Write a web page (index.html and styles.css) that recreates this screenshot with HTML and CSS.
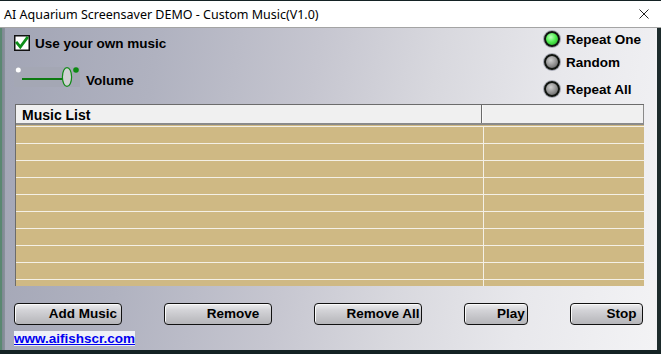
FILE: index.html
```html
<!DOCTYPE html>
<html>
<head>
<meta charset="utf-8">
<link rel="stylesheet" href="styles.css">
</head>
<body>
<div class="screen">
  <div class="titlebar">
    <span class="title">AI Aquarium Screensaver DEMO - Custom Music(V1.0)</span>
    <svg class="close" width="10" height="10" viewBox="0 0 10 10"><path d="M0.5 0.5 L9.5 9.5 M9.5 0.5 L0.5 9.5" stroke="#222" stroke-width="1" fill="none"/></svg>
  </div>
  <div class="body">
    <div class="frame-left"></div>
    <div class="client">
      <div class="top">
        <div class="opts">
          <div class="check">
            <svg class="box" width="16" height="16" viewBox="0 0 16 16">
              <rect x="0.75" y="0.75" width="14.5" height="14.5" fill="#fff" stroke="#111" stroke-width="1.5"/>
              <path d="M3 8 L6.3 12 L13 3" stroke="#0f8f1a" stroke-width="2.8" fill="none" stroke-linecap="square"/>
            </svg>
            <span>Use your own music</span>
          </div>
          <div class="vol">
            <svg class="slider" width="66" height="20" viewBox="0 0 66 20">
              <rect x="0" y="0" width="66" height="20" fill="#a4a7b4"/>
              <circle cx="4.3" cy="3" r="2.5" fill="#fff"/>
              <rect x="8" y="11" width="41" height="2" fill="#0c7a10"/>
              <ellipse cx="53" cy="10" rx="4.6" ry="9.4" fill="#d2d2d4" stroke="#118a18" stroke-width="1.2"/>
              <circle cx="62" cy="3" r="2.8" fill="#0c8a12"/>
            </svg>
            <span>Volume</span>
          </div>
        </div>
        <div class="radios">
          <div class="radio r1"><span class="dot on"></span>Repeat One</div>
          <div class="radio r2"><span class="dot"></span>Random</div>
          <div class="radio r3"><span class="dot"></span>Repeat All</div>
        </div>
      </div>
      <div class="list">
        <div class="head"><div class="h1">Music List</div><div class="h2"></div></div>
        <div class="rows">
          <div class="row"><div class="c1"></div><div class="c2"></div></div>
          <div class="row"><div class="c1"></div><div class="c2"></div></div>
          <div class="row"><div class="c1"></div><div class="c2"></div></div>
          <div class="row"><div class="c1"></div><div class="c2"></div></div>
          <div class="row"><div class="c1"></div><div class="c2"></div></div>
          <div class="row"><div class="c1"></div><div class="c2"></div></div>
          <div class="row"><div class="c1"></div><div class="c2"></div></div>
          <div class="row"><div class="c1"></div><div class="c2"></div></div>
          <div class="row"><div class="c1"></div><div class="c2"></div></div>
          <div class="row"><div class="c1"></div><div class="c2"></div></div>
        </div>
      </div>
      <div class="buttons">
        <div class="btn w108">Add Music</div>
        <div class="btn w108">Remove</div>
        <div class="btn w108">Remove All</div>
        <div class="btn w64">Play</div>
        <div class="btn w73">Stop</div>
      </div>
      <div class="linkrow"><a class="link">www.aifishscr.com</a></div>
    </div>
    <div class="frame-right"></div>
  </div>
</div>
</body>
</html>
```
FILE: styles.css
```css
html, body {
  margin: 0;
  padding: 0;
  background: #0f1c1e;
}
.screen {
  width: 661px;
  height: 354px;
  padding-top: 1px;
  box-sizing: border-box;
  background: #142224;
  overflow: hidden;
}
.titlebar {
  height: 26px;
  background: #fff;
  border-bottom: 1px solid #a4a4a4;
  display: flex;
  align-items: center;
}
.title {
  font-family: "Noto Sans", "DejaVu Sans", sans-serif;
  font-size: 12.5px;
  color: #000;
  padding-left: 4px;
  padding-top: 1px;
}
.close {
  margin-left: auto;
  margin-right: 12px;
}
.body {
  display: flex;
  height: 322px;
}
.frame-left {
  width: 5px;
  background: linear-gradient(to right, #5a8871 0, #5a8871 2px, #7d8891 2px, #8a929c 5px);
}
.frame-right {
  width: 6px;
  background: linear-gradient(to right, #f2f2f4 0, #f2f2f4 2px, #1d2b2c 2px, #1d2b2c 6px);
}
.client {
  width: 650px;
  box-sizing: border-box;
  padding: 0 11px 0 9px;
  background: linear-gradient(100deg, #a2a5b5 0%, #b0b2c0 22%, #c6c6d0 45%, #d8d8de 62%, #e8e8ec 80%, #f3f3f5 100%);
  font-family: "Liberation Sans", Arial, sans-serif;
  font-weight: bold;
  font-size: 13.5px;
  color: #000;
}
.top {
  height: 76px;
  display: flex;
  justify-content: space-between;
}
.opts {
  display: flex;
  flex-direction: column;
}
.check {
  margin-top: 7px;
  height: 16px;
  display: flex;
  align-items: center;
  gap: 5px;
}
.box { display: block; }
.vol {
  margin-top: 16px;
  height: 20px;
  display: flex;
  align-items: center;
  gap: 6px;
}
.vol span { padding-top: 6px; }
.slider { display: block; }
.radios {
  width: 100px;
  display: flex;
  flex-direction: column;
}
.radio {
  height: 18px;
  display: flex;
  align-items: center;
  gap: 6px;
}
.r1 { margin-top: 2px; }
.r2 { margin-top: 5px; }
.r3 { margin-top: 9px; }
.dot {
  width: 16px;
  height: 16px;
  box-sizing: border-box;
  border-radius: 50%;
  border: 2px solid #101410;
  background: radial-gradient(circle at 40% 35%, #d0d0d0 0%, #8c8c8c 55%, #505050 100%);
  box-shadow: 0 0 0 1px #a4a6b2;
}
.dot.on {
  background: radial-gradient(circle at 40% 35%, #c0ffc0 0%, #52ee52 45%, #1aa01a 100%);
}
.list {
  margin-left: 1px;
  width: 629px;
  height: 182px;
  border-left: 1px solid #6c6c6c;
  border-top: 1px solid #6c6c6c;
  box-sizing: border-box;
  display: flex;
  flex-direction: column;
}
.head {
  height: 20px;
  display: flex;
  background: #f0f0f0;
  border-bottom: 2px solid #8a8a8a;
  box-sizing: border-box;
}
.h1 {
  width: 466px;
  border-right: 1px solid #6a6a6a;
  padding: 2px 0 0 6px;
  box-sizing: border-box;
  line-height: 16px;
  font-size: 14px;
}
.h2 {
  flex: 1;
  border-left: 1px solid #fafafa;
  border-right: 1px solid #8a8a8a;
}
.rows {
  flex: 1;
  background: #cfb984;
  padding-top: 1px;
  overflow: hidden;
}
.row {
  height: 16px;
  border-top: 1px solid #f4f0e6;
  display: flex;
}
.c1 { width: 467px; }
.c2 {
  flex: 1;
  border-left: 1px solid #f4f0e6;
}
.buttons {
  margin-top: 17px;
  display: flex;
  gap: 42px;
}
.btn {
  height: 22px;
  box-sizing: border-box;
  border: 1px solid #111;
  border-radius: 4px;
  background: linear-gradient(to bottom, #eeeef0 0%, #d4d4d8 30%, #c2c2c6 70%, #b6b6ba 100%);
  box-shadow: inset 1px 1px 0 #fafafa;
  padding-left: 30px;
  text-align: center;
  line-height: 20px;
  white-space: nowrap;
  overflow: hidden;
}
.w108 { width: 108px; }
.w64 { width: 64px; }
.w73 { width: 73px; }
.linkrow {
  margin-top: 6px;
  display: flex;
}
.link {
  display: block;
  height: 15px;
  width: 121px;
  background: #eef0f7;
  color: #0000f0;
  text-decoration: underline;
  line-height: 15px;
  white-space: nowrap;
  overflow: hidden;
}
```
